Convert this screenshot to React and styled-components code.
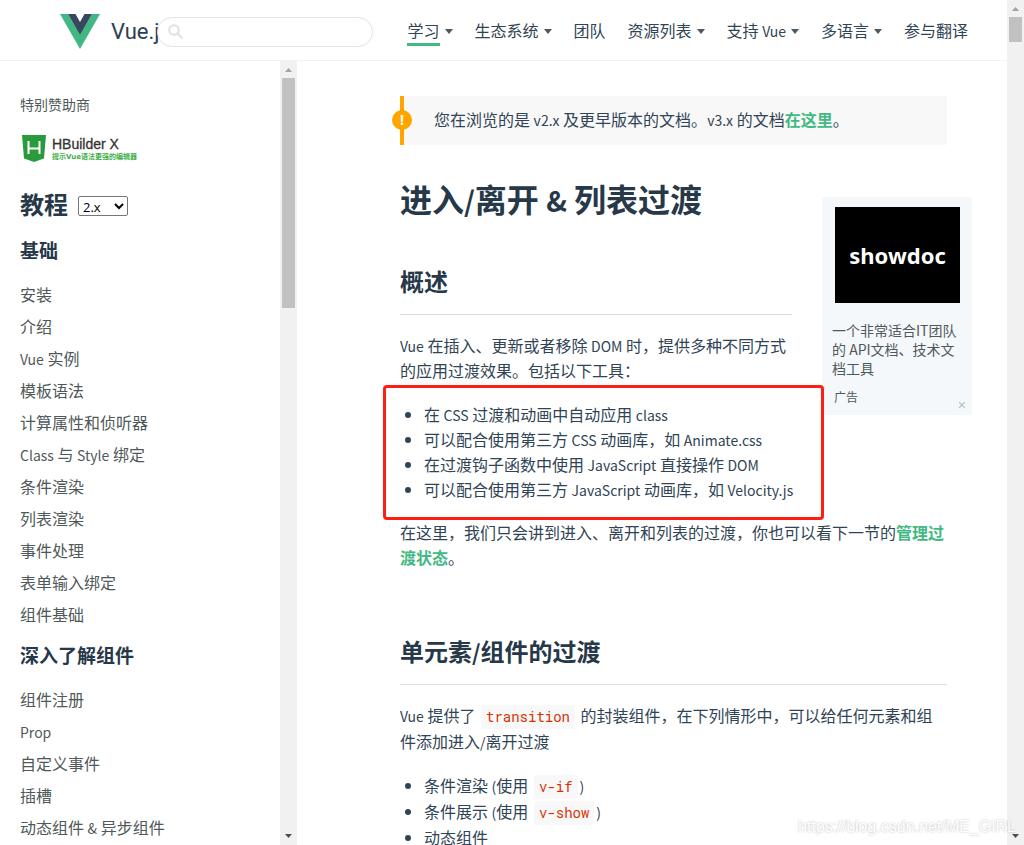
import React from "react";
import styled, { createGlobalStyle } from "styled-components";

const GlobalStyle = createGlobalStyle`
  * { box-sizing: border-box; }
  body {
    margin: 0;
    background: #fff;
    color: #304455;
    font: 16px/25px "Noto Sans CJK SC", sans-serif;
  }
  h1, h2, h3, p, ul { margin: 0; padding: 0; }
  a { color: inherit; text-decoration: none; }
`;

const Page = styled.div`
  position: relative;
  display: flex;
  height: 100vh;
  overflow: hidden;
`;

const Viewport = styled.div`
  flex: 1;
  min-width: 0;
  display: flex;
  flex-direction: column;
`;

/* ---------- shared text ---------- */

const Latin = styled.span`
  font-size: ${(p) => p.$size || 14}px;
  line-height: 1;
`;

/* Latin words look too large beside Han characters, so they go one step down. */
const Mixed = ({ children, size }) =>
  children
    .split(/([A-Za-z0-9.()/&]+)/)
    .filter(Boolean)
    .map((part, i) => (/[A-Za-z0-9.()/&]/.test(part) ? <Latin key={i} $size={size}>{part}</Latin> : part));

/* ---------- scroll bar ---------- */

const Track = styled.div`
  flex: 0 0 17px;
  display: flex;
  flex-direction: column;
  align-items: center;
  background: #f1f1f1;
`;

const Thumb = styled.div`
  width: 13px;
  height: ${(p) => p.$length}px;
  margin-bottom: auto;
  background: #c1c1c1;
`;

const ScrollArrow = styled.svg`
  display: block;
  width: 17px;
  height: 17px;
  flex: none;
`;

const ScrollBar = ({ length }) => (
  <Track aria-hidden="true">
    <ScrollArrow viewBox="0 0 17 17"><path d="M5 11h7L8.500 7z" fill="#a3a3a3" /></ScrollArrow>
    <Thumb $length={length} />
    <ScrollArrow viewBox="0 0 17 17"><path d="M5 6h7L8.500 10z" fill="#505050" /></ScrollArrow>
  </Track>
);

/* ---------- header ---------- */

const Header = styled.header`
  flex: none;
  display: flex;
  align-items: center;
  height: 61px;
  padding: 3px 39px 0 60px;
  border-bottom: 1px solid #f1f1f1;
`;

const Brand = styled.a`
  flex: 0 0 97px;
  min-width: 0;
  display: flex;
  align-items: center;
  gap: 11px;
  white-space: nowrap;
  color: #2c3e50;
  font: 22px/30px Roboto, sans-serif;

  svg { flex: none; display: block; }
`;

const SearchBox = styled.label`
  position: relative;
  flex: 0 0 216px;
  min-width: 0;
  display: flex;
  align-items: center;
  gap: 6px;
  height: 30px;
  padding: 0 10px;
  border: 1px solid #e3e3e3;
  border-radius: 15px;
  background: #fff;

  svg { flex: none; }
`;

const SearchInput = styled.input`
  flex: 1;
  min-width: 0;
  border: 0;
  outline: 0;
  background: transparent;
  font: inherit;
`;

const Nav = styled.nav`
  display: flex;
  gap: 22px;
  margin-left: auto;
`;

const NavItem = styled.div`
  display: flex;
  align-items: center;
  gap: 5px;
  white-space: nowrap;
`;

const NavLink = styled.a`
  border-bottom: 3px solid ${(p) => (p.$current ? "#42b983" : "transparent")};
`;

const Caret = styled.span`
  border: 4px solid transparent;
  border-top: 5px solid #4f5959;
  border-bottom: 0;
`;

const NAV = [
  { text: "学习", menu: true, current: true },
  { text: "生态系统", menu: true },
  { text: "团队" },
  { text: "资源列表", menu: true },
  { text: "支持 Vue", menu: true },
  { text: "多语言", menu: true },
  { text: "参与翻译" },
];

/* ---------- sidebar ---------- */

const Body = styled.div`
  flex: 1;
  min-height: 0;
  display: flex;
`;

const Sidebar = styled.aside`
  flex: 0 0 297px;
  display: flex;
  color: #4f5959;
`;

const SidebarInner = styled.div`
  flex: 1;
  overflow: hidden;
  padding: 33px 20px 0;
`;

const SponsorLabel = styled.p`
  font-size: 14px;
  line-height: 20px;
`;

const Sponsor = styled.a`
  display: flex;
  align-items: center;
  gap: 6px;
  height: 30px;
  margin: 20px 0 24px;
  padding-left: 1px;
`;

const SponsorText = styled.span`
  display: flex;
  flex-direction: column;
`;

const SponsorName = styled.span`
  color: #333;
  -webkit-text-stroke: 0.3px #333;
  font: 14px/16px "Liberation Sans", sans-serif;
`;

const SponsorNote = styled.span`
  color: #41b04a;
  font: bold 7px/10px "DejaVu Sans", "Noto Sans CJK SC", sans-serif;
`;

const GuideTitle = styled.h2`
  display: flex;
  align-items: center;
  gap: 10px;
  height: 30px;
  margin-bottom: 20px;
  color: #273849;
  font-size: 24px;
`;

const Version = styled.select`
  width: 50px;
  height: 20px;
  margin-top: 6px;
  padding: 0;
  border: 1px solid #767676;
  border-radius: 2px;
  background: #fff;
  color: #000;
  font: 13px "Open Sans", sans-serif;
`;

const MenuTitle = styled.h3`
  margin: 13px 0 16px;
  color: #273849;
  font-size: 19px;
  line-height: 24px;
`;

const Menu = styled.ul`
  list-style: none;
  line-height: 32px;
`;

const MENUS = [
  ["基础", ["安装", "介绍", "Vue 实例", "模板语法", "计算属性和侦听器", "Class 与 Style 绑定", "条件渲染", "列表渲染", "事件处理", "表单输入绑定", "组件基础"]],
  ["深入了解组件", ["组件注册", "Prop", "自定义事件", "插槽", "动态组件 & 异步组件"]],
];

/* ---------- article ---------- */

const Article = styled.main`
  flex: 1;
  min-width: 0;
  overflow: hidden;
  padding: 35px 60px 0 103px;
`;

const Tip = styled.p`
  position: relative;
  padding: 11px 24px 13px 30px;
  border-left: 4px solid #ffa500;
  border-radius: 0 2px 2px 0;
  background: #f8f8f8;
`;

const TipMark = styled.span`
  position: absolute;
  top: 14px;
  left: -12px;
  width: 20px;
  height: 20px;
  border-radius: 50%;
  background: #ffa500;
  color: #fff;
  text-align: center;
  font: bold 14px/20px "Open Sans", sans-serif;
`;

const TextLink = styled.a`
  color: #42b983;
  font-weight: 600;
`;

const Title = styled.h1`
  margin-top: 33px;
  color: #273849;
  font-size: 32px;
  line-height: 40px;
`;

const Section = styled.h2`
  display: flow-root;
  margin-top: ${(p) => (p.$lead ? 47 : 65)}px;
  padding-bottom: 17px;
  border-bottom: 1px solid #ddd;
  color: #273849;
  font-size: 24px;
  line-height: 32px;
`;

const Text = styled.p`
  margin-top: 18px;
`;

const ListFrame = styled.div`
  position: relative;
  margin-top: 19px;
`;

const List = styled.ul`
  padding-left: 24px;
`;

const Highlight = styled.div`
  position: absolute;
  top: -17px;
  left: -17px;
  width: 441px;
  height: 135px;
  border: 3px solid #ff1f12;
  border-radius: 4px;
  pointer-events: none;
`;

const Code = styled.code`
  display: inline-block;
  margin: 0 2px;
  padding: 0 5px;
  border-radius: 2px;
  background: #f8f8f8;
  color: #d63200;
  font: 14px/24px "Roboto Mono", "Liberation Mono", monospace;
`;

const Ad = styled.aside`
  float: right;
  width: 150px;
  margin: 52px -25px 30px 30px;
  padding: 10px 10px 4px;
  border-radius: 3px;
  background: #f4f8fb;
  color: #4f5959;
`;

const AdImage = styled.div`
  display: flex;
  align-items: center;
  justify-content: center;
  height: 96px;
  margin: 0 2px 0 3px;
  background: #000;
  color: #fff;
  font: bold 22px "Noto Sans", sans-serif;
`;

const AdText = styled.p`
  margin-top: 18px;
  font-size: 14px;
  line-height: 19px;
`;

const AdFooter = styled.div`
  display: flex;
  justify-content: space-between;
  height: 24px;
  margin: 9px -4px 0 0;
  padding-left: 2px;
  font-size: 12px;
  line-height: 20px;
`;

const AdClose = styled.button`
  align-self: flex-end;
  height: 12px;
  padding: 0;
  border: 0;
  background: none;
  color: #b4bdc4;
  font: 14px/12px "Liberation Sans", sans-serif;
`;

const Watermark = styled.div`
  position: absolute;
  right: 8px;
  bottom: 6px;
  color: #fff;
  text-shadow: 0 0 2px rgba(0, 0, 0, 0.3);
  font: 16px/24px "Liberation Sans", sans-serif;
`;

const VueMark = () => (
  <svg width="40" height="35" viewBox="0 0 40 35" aria-hidden="true">
    <path d="M0 0h8l12 20.800L32 0h8L20 35z" fill="#41b883" />
    <path d="M8 0h7.500L20 8l4.500-8H32L20 21z" fill="#34495e" />
  </svg>
);

export default function App() {
  return (
    <Page lang="zh-CN">
      <GlobalStyle />
      <Viewport>
        <Header>
          <Brand href="#home"><VueMark />Vue.js</Brand>
          <SearchBox>
            <svg width="16" height="16" viewBox="0 0 16 16" fill="none" stroke="#dfdfdf" strokeWidth="2" aria-hidden="true">
              <circle cx="6" cy="6" r="4.800" />
              <path d="M9.500 9.500l5 5" />
            </svg>
            <SearchInput type="search" aria-label="搜索" />
          </SearchBox>
          <Nav>
            {NAV.map((n) => (
              <NavItem key={n.text}>
                <NavLink href="#nav" $current={n.current}><Mixed>{n.text}</Mixed></NavLink>
                {n.menu && <Caret />}
              </NavItem>
            ))}
          </Nav>
        </Header>
        <Body>
          <Sidebar>
            <SidebarInner>
              <SponsorLabel>特别赞助商</SponsorLabel>
              <Sponsor href="#sponsor">
                <svg width="25" height="30" viewBox="0 0 25 30" aria-hidden="true">
                  <path d="M1 1h24l-2 23.500L13 28 3 24.500z" fill="#2a9b3c" />
                  <path d="M7.500 7v13M18.500 7v13M7.500 14.500h11" stroke="#fff" strokeWidth="2" fill="none" />
                </svg>
                <SponsorText>
                  <SponsorName>HBuilder X</SponsorName>
                  <SponsorNote>提示Vue语法更强的编辑器</SponsorNote>
                </SponsorText>
              </Sponsor>
              <GuideTitle>
                教程
                <Version aria-label="版本" defaultValue="2.x"><option>2.x</option></Version>
              </GuideTitle>
              {MENUS.map(([title, items]) => (
                <React.Fragment key={title}>
                  <MenuTitle>{title}</MenuTitle>
                  <Menu>
                    {items.map((t) => <li key={t}><a href="#guide"><Mixed>{t}</Mixed></a></li>)}
                  </Menu>
                </React.Fragment>
              ))}
            </SidebarInner>
            <ScrollBar length={230} />
          </Sidebar>
          <Article>
            <Tip>
              <TipMark>!</TipMark>
              <Mixed>您在浏览的是 v2.x 及更早版本的文档。v3.x 的文档</Mixed>
              <TextLink href="#v3">在这里</TextLink>。
            </Tip>
            <Ad>
              <AdImage>showdoc</AdImage>
              <AdText>一个非常适合IT团队的 API文档、技术文档工具</AdText>
              <AdFooter>广告<AdClose type="button" aria-label="关闭">×</AdClose></AdFooter>
            </Ad>
            <Title><Mixed size={28}>进入/离开 & 列表过渡</Mixed></Title>
            <Section $lead>概述</Section>
            <Text><Mixed>Vue 在插入、更新或者移除 DOM 时，提供多种不同方式的应用过渡效果。包括以下工具：</Mixed></Text>
            <ListFrame>
              <List>
                <li><Mixed>在 CSS 过渡和动画中自动应用 class</Mixed></li>
                <li><Mixed>可以配合使用第三方 CSS 动画库，如 Animate.css</Mixed></li>
                <li><Mixed>在过渡钩子函数中使用 JavaScript 直接操作 DOM</Mixed></li>
                <li><Mixed>可以配合使用第三方 JavaScript 动画库，如 Velocity.js</Mixed></li>
              </List>
              <Highlight />
            </ListFrame>
            <Text>
              在这里，我们只会讲到进入、离开和列表的过渡，你也可以看下一节的<TextLink href="#state">管理过渡状态</TextLink>。
            </Text>
            <Section><Mixed size={22}>单元素/组件的过渡</Mixed></Section>
            <Text>
              <Mixed>Vue 提供了 </Mixed><Code>transition</Code>
              <Mixed> 的封装组件，在下列情形中，可以给任何元素和组件添加进入/离开过渡</Mixed>
            </Text>
            <ListFrame>
              <List>
                <li><Mixed>条件渲染 (使用 </Mixed><Code>v-if</Code><Latin>)</Latin></li>
                <li><Mixed>条件展示 (使用 </Mixed><Code>v-show</Code><Latin>)</Latin></li>
                <li>动态组件</li>
              </List>
            </ListFrame>
          </Article>
        </Body>
      </Viewport>
      <ScrollBar length={25} />
      <Watermark>https://blog.csdn.net/ME_GIRL</Watermark>
    </Page>
  );
}
